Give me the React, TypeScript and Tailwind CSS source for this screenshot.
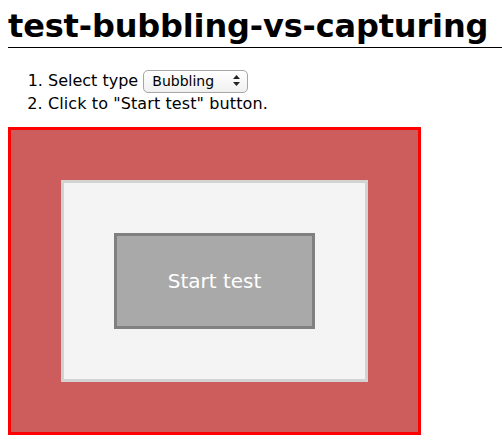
import { useState } from 'react';

export default function App() {
  const [type, setType] = useState('bubbling');

  return (
    <div className="pl-2 bg-white text-black min-h-[446px]" style={{ fontFamily: '"DejaVu Sans", Verdana, sans-serif' }}>
      <h1 className="mt-[7px] pb-[2px] text-[32px] leading-[38px] font-bold tracking-[-0.15px] border-b border-black">
        test-bubbling-vs-capturing
      </h1>

      <ol className="mt-[21px] pl-10 list-decimal text-[16px]">
        <li className="leading-[23px]">
          Select type{' '}
          <span className="relative inline-block align-top">
            <select
              value={type}
              onChange={(e) => setType(e.target.value)}
              className="appearance-none h-[23px] w-[105px] pl-[8px] pr-5 text-[14px] leading-[21px] border border-[#a6a6a6] rounded-[5px] bg-gradient-to-b from-white to-[#f0f0f0] text-black outline-none"
            >
              <option value="bubbling">Bubbling</option>
              <option value="capturing">Capturing</option>
            </select>
            <svg className="absolute right-[8px] top-[6px] pointer-events-none" width="7" height="11" viewBox="0 0 7 11">
              <path d="M3.5 0 L7 4 L0 4 Z" fill="#222" />
              <path d="M3.5 11 L7 7 L0 7 Z" fill="#222" />
            </svg>
          </span>
        </li>
        <li className="leading-[21px] tracking-[0.1px]">Click to "Start test" button.</li>
      </ol>

      {/* outer / inner / button boxes */}
      <div className="mt-[13px] w-[413px] border-[3px] border-[#ff0000] bg-[#cd5c5c] p-[50px]">
        <div className="border-[3px] border-[#d3d3d3] bg-[#f4f4f4] p-[50px]">
          <button className="flex items-center justify-center w-[201px] h-[96px] border-[3px] border-[#808080] bg-[#a9a9a9] text-white text-[20px]">
            Start test
          </button>
        </div>
      </div>
    </div>
  );
}
